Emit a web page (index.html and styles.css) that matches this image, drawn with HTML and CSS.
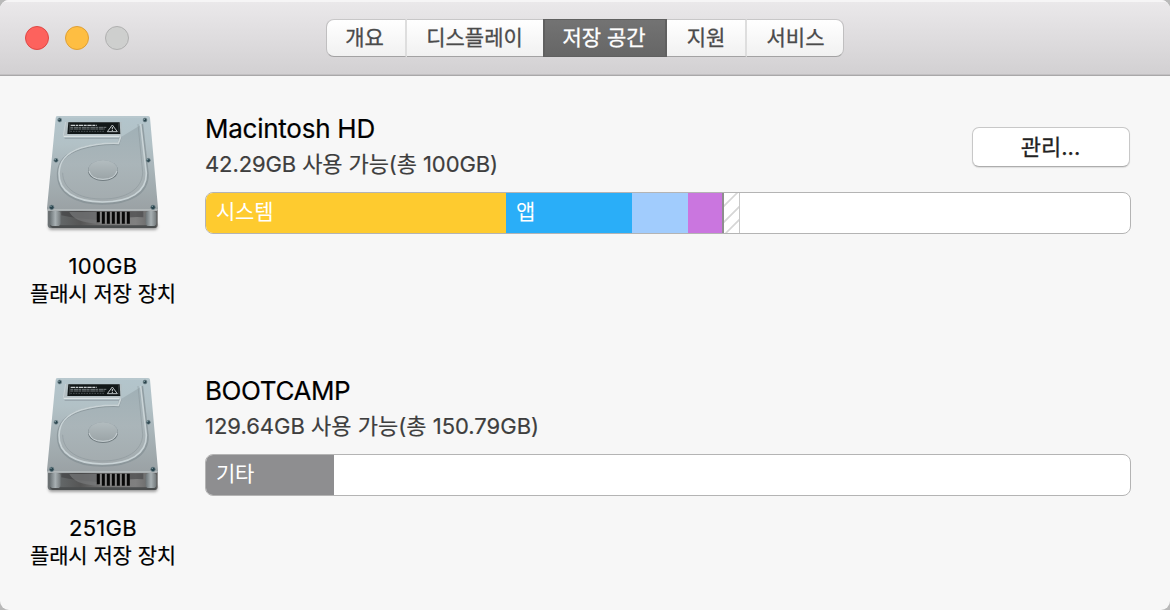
FILE: index.html
```html
<!DOCTYPE html>
<html lang="ko">
<head>
<meta charset="utf-8">
<title>저장 공간</title>
<link rel="stylesheet" href="styles.css">
</head>
<body>
<svg class="defs" width="0" height="0" aria-hidden="true">
  <defs>
    <linearGradient id="plate" x1="0" y1="0" x2="0" y2="1">
      <stop offset="0" stop-color="#b3c5cc"/><stop offset=".3" stop-color="#b2c1c6"/><stop offset=".65" stop-color="#a5b0b4"/><stop offset="1" stop-color="#9aa1a4"/>
    </linearGradient>
    <linearGradient id="disc" x1="0" y1="0" x2="0" y2="1">
      <stop offset="0" stop-color="#a0b0b6"/><stop offset=".5" stop-color="#aab5b9"/><stop offset="1" stop-color="#a3abae"/>
    </linearGradient>
    <linearGradient id="hub" x1="0" y1="0" x2="0" y2="1">
      <stop offset="0" stop-color="#b3bdc0"/><stop offset="1" stop-color="#9ba4a7"/>
    </linearGradient>
    <linearGradient id="front" x1="0" y1="0" x2="1" y2="0">
      <stop offset="0" stop-color="#6c7274"/><stop offset=".3" stop-color="#555"/><stop offset=".5" stop-color="#777"/><stop offset=".8" stop-color="#808080"/><stop offset="1" stop-color="#5d5d5d"/>
    </linearGradient>
    <linearGradient id="post" x1="0" y1="0" x2="1" y2="0">
      <stop offset="0" stop-color="#6b7376"/><stop offset=".5" stop-color="#a8b0b3"/><stop offset="1" stop-color="#73797b"/>
    </linearGradient>
    <filter id="soft" x="-10%" y="-100%" width="120%" height="300%"><feGaussianBlur stdDeviation="4"/></filter>
    <filter id="bevel"><feGaussianBlur stdDeviation="1.5"/></filter>
    <symbol id="drive" viewBox="-6 0 450 420">
      <rect x="56" y="370" width="326" height="19" rx="8" fill="#555" opacity=".6" filter="url(#soft)"/>
      <path d="M53 330H383V374Q383 384 373 384H64Q53 384 53 374Z" fill="url(#front)"/>
      <path d="M94 334H340V352Q300 349 250 360Q170 363 94 346Z" fill="#3c3d3e" opacity=".55"/>
      <path d="M118 336Q132 366 198 371V336Z" fill="#77797a" opacity=".7"/>
      <path d="M60 376H378V380Q376 384 370 384H68Q61 384 60 376Z" fill="#4a4d4e"/>
      <rect x="60" y="333" width="32" height="45" rx="10" fill="url(#post)"/>
      <rect x="347" y="333" width="32" height="45" rx="10" fill="url(#post)"/>
      <path d="M200 335H300V370H210L200 361Z" fill="#858585"/>
      <path d="M205 335V367M220 335V371M235 335V371M250 335V371M265 335V371M280 335V371M295 335V371" stroke="#080808" stroke-width="9"/>
      <path d="M83 48H354Q359 48 360 53L384 324Q385 332 378 332H57Q50 332 51 324L77 54Q77 48 83 48Z" fill="url(#plate)"/>
      <path d="M79 51H358" stroke="#c3ced2" stroke-width="2"/>
      <path d="M52 330H382" stroke="#c6cccd" stroke-width="3"/>
      <path d="M107 66H275L274 105Q274 111 268 111H105Q98 111 99 106Z" fill="#b3bfc3"/>
      <path d="M101 109H273" stroke="#dce3e5" stroke-width="4"/>
      <path d="M104 115H272" stroke="#879399" stroke-width="2"/>
      <path d="M107 66L100 107" stroke="#d2dade" stroke-width="2"/>
      <path d="M272 112L264 132Q203 130 152 146C105 162 85 185 84 220C82 278 135 311 217 311C300 311 354 280 353 222L337 72" fill="url(#disc)"/>
      <g fill="none" filter="url(#bevel)">
        <path d="M272 110L265 132Q203 130 152 146C105 162 85 185 84 220C82 278 135 311 217 311C300 311 354 280 353 222L336 72" stroke="#7e8b90" stroke-width="7" opacity=".6"/>
        <path d="M272 110L265 130Q203 128 152 144C105 160 88 185 87 220C85 274 135 305 217 306C300 306 350 276 349 220L332 72" stroke="#c9d3d6" stroke-width="5"/>
        <path d="M98 218C98 267 145 297 217 297C290 297 337 266 338 217L324 72" stroke="#849095" stroke-width="3" opacity=".45"/>
      </g>
      <ellipse cx="219" cy="212" rx="45" ry="31" fill="#737e82"/>
      <ellipse cx="219" cy="209" rx="43" ry="29" fill="url(#hub)" stroke="#a9b4b8" stroke-width="2"/>
      <path d="M177 213Q184 238 219 238T261 213" fill="none" stroke="#cbd3d6" stroke-width="3"/>
      <path d="M115 67H269L271 102H112Z" fill="#111718"/>
      <path d="M119 70V98M266 70L267 98" stroke="#81898b"/>
      <path d="M122 76H200" stroke="#c9ced0" stroke-width="4" stroke-dasharray="13 2 8 2"/>
      <path d="M121 82H230M121 87H224" stroke="#a5acaf" stroke-width="2" stroke-dasharray="8 2 14 1"/>
      <path d="M121 94H224" stroke="#687073" stroke-width="2" stroke-dasharray="5 3"/>
      <path d="M247 75L232 95H262Z" fill="none" stroke="#bac1c3" stroke-width="3" stroke-linejoin="round"/>
      <path d="M247 81V88M247 90V93" stroke="#d1d5d6" stroke-width="3"/>
      <g fill="#2b454e" stroke="#7a8d93" stroke-width="2">
        <circle cx="89" cy="60" r="6"/><circle cx="345" cy="60" r="6"/><circle cx="78" cy="181" r="6"/><circle cx="355" cy="181" r="6"/><circle cx="65" cy="322" r="7"/><circle cx="369" cy="322" r="7"/>
      </g>
      <g fill="#8ea7ae"><circle cx="87" cy="58" r="2"/><circle cx="343" cy="58" r="2"/><circle cx="76" cy="179" r="2"/><circle cx="353" cy="179" r="2"/><circle cx="63" cy="319" r="2"/><circle cx="367" cy="319" r="2"/></g>
    </symbol>
  </defs>
</svg>
<div class="window">
  <header class="toolbar">
    <div class="lights"><i class="light close"></i><i class="light minimize"></i><i class="light disabled"></i></div>
    <nav class="tabs">
      <a class="tab overview">개요</a><a class="tab displays">디스플레이</a><a class="tab storage">저장 공간</a><a class="tab support">지원</a><a class="tab service">서비스</a>
    </nav>
  </header>
  <main class="volumes">
    <section class="volume">
      <div class="device">
        <svg class="drive"><use href="#drive"/></svg>
        <div class="size">100GB</div>
        <div class="kind">플래시 저장 장치</div>
      </div>
      <div class="info">
        <div class="heading">
          <div class="names"><h1 class="name">Macintosh HD</h1><p class="free startup">42.29GB 사용 가능(총 100GB)</p></div>
          <button class="manage">관리...</button>
        </div>
        <div class="bar">
          <div class="segment system">시스템</div><div class="segment apps">앱</div><div class="segment photos"></div><div class="segment media"></div><div class="segment purgeable"><svg width="15" height="40"><path d="M-2 15L15 -2M-2 31L17 12M1 41L17 25" stroke="#d6d6d6" stroke-width="1.6"/></svg></div>
        </div>
      </div>
    </section>
    <section class="volume">
      <div class="device">
        <svg class="drive"><use href="#drive"/></svg>
        <div class="size">251GB</div>
        <div class="kind">플래시 저장 장치</div>
      </div>
      <div class="info">
        <div class="heading">
          <div class="names"><h1 class="name bootcamp">BOOTCAMP</h1><p class="free">129.64GB 사용 가능(총 150.79GB)</p></div>
        </div>
        <div class="bar"><div class="segment other">기타</div></div>
      </div>
    </section>
  </main>
</div>
</body>
</html>
```
FILE: styles.css
```css
* { box-sizing: border-box; }
body { margin: 0; background: #b9b9b9; font-family: Inter, "Noto Sans CJK KR", sans-serif; color: #000; }
.defs { position: absolute; }
.window { width: 1170px; height: 610px; overflow: hidden; background: #f7f7f7; border-radius: 9px; }
.toolbar { height: 76px; display: grid; grid-template-columns: 326px 518px; align-items: start; padding-top: 19px; background: linear-gradient(#ebe9eb, #d2d0d2); border-bottom: 1px solid #a9a8a9; box-shadow: inset 0 2px #f6f5f6, inset 0 -1px #c2c0c2; }
.lights { display: flex; gap: 16px; padding: 7px 0 0 25px; }
.light { width: 24px; height: 24px; border-radius: 50%; border: 1px solid; }
.close { background: #fd625d; border-color: #df4744; }
.minimize { background: #febe42; border-color: #df9f34; }
.disabled { background: #cecfce; border-color: #b0b0b0; }
.tabs { display: flex; height: 38px; border-radius: 8px; }
.tab { display: block; height: 38px; line-height: 36px; text-align: center; font-size: 21px; color: #4b4b4b; -webkit-text-stroke: .3px; background: linear-gradient(#fff, #f1f1f1); border-top: 1px solid #c8c7c8; border-bottom: 1px solid #a3a2a3; }
.overview { width: 81px; padding-right: 3px; border-left: 1px solid #c0bfc0; border-right: 2px solid #dedede; border-radius: 8px 0 0 8px; }
.displays { width: 136px; padding-right: 1px; }
.storage { width: 124px; padding-right: 2px; color: #fff; background: linear-gradient(#737373, #666); border: solid #606060; border-width: 1px 2px; }
.support { width: 80px; border-right: 2px solid #dedede; }
.service { width: 97px; padding-left: 1px; border-right: 1px solid #c0bfc0; border-radius: 0 8px 8px 0; }
.volumes { padding: 24px 39px 0 28px; }
.volume { display: grid; grid-template-columns: 150px 926px; column-gap: 27px; height: 262px; }
.device { text-align: center; font-size: 21px; line-height: 28px; -webkit-text-stroke: .2px; }
.drive { display: block; width: 150px; height: 140px; margin-bottom: 12px; }
.size { font-size: 22px; height: 28px; letter-spacing: .3px; }
.kind { margin-left: -5px; margin-right: -5px; white-space: nowrap; letter-spacing: -.1px; }
.heading { display: flex; justify-content: space-between; height: 92px; padding-top: 11px; }
.name { margin: 0; font-size: 26px; font-weight: 400; line-height: 36px; letter-spacing: -.25px; -webkit-text-stroke: .2px; }
.bootcamp { letter-spacing: -.4px; }
.free { margin: 0; font-size: 22px; line-height: 34px; color: #3e3e3e; white-space: nowrap; -webkit-text-stroke: .2px; }
.startup { letter-spacing: -.1px; }
.manage { width: 158px; height: 40px; margin: 16px 1px 0 0; padding: 0 1px 0 0; border: 1px solid #c8c8c8; border-bottom-color: #adadad; border-radius: 7px; background: #fff; box-shadow: 0 1px 1px #ddd; font: 22px/36px Inter, "Noto Sans CJK KR", sans-serif; color: #222; -webkit-text-stroke: .3px; }
.bar { display: flex; height: 42px; overflow: hidden; border: 1px solid #b4b4b4; border-radius: 8px; background: #fff; }
.segment { height: 40px; line-height: 38px; font-size: 21px; color: #fff; letter-spacing: -.2px; }
.system { width: 300px; padding-left: 10px; background: #fecb2f; }
.apps { width: 126px; padding-left: 10px; background: #2aaef8; }
.photos { width: 56px; background: #a1ccfd; }
.media { width: 36px; background: #ca76df; border-right: 2px solid #8e8e8e; }
.purgeable { width: 16px; border-right: 1px solid #c8c8c8; }
.purgeable svg { display: block; }
.other { width: 128px; padding-left: 10px; background: #8e8e90; }
```
